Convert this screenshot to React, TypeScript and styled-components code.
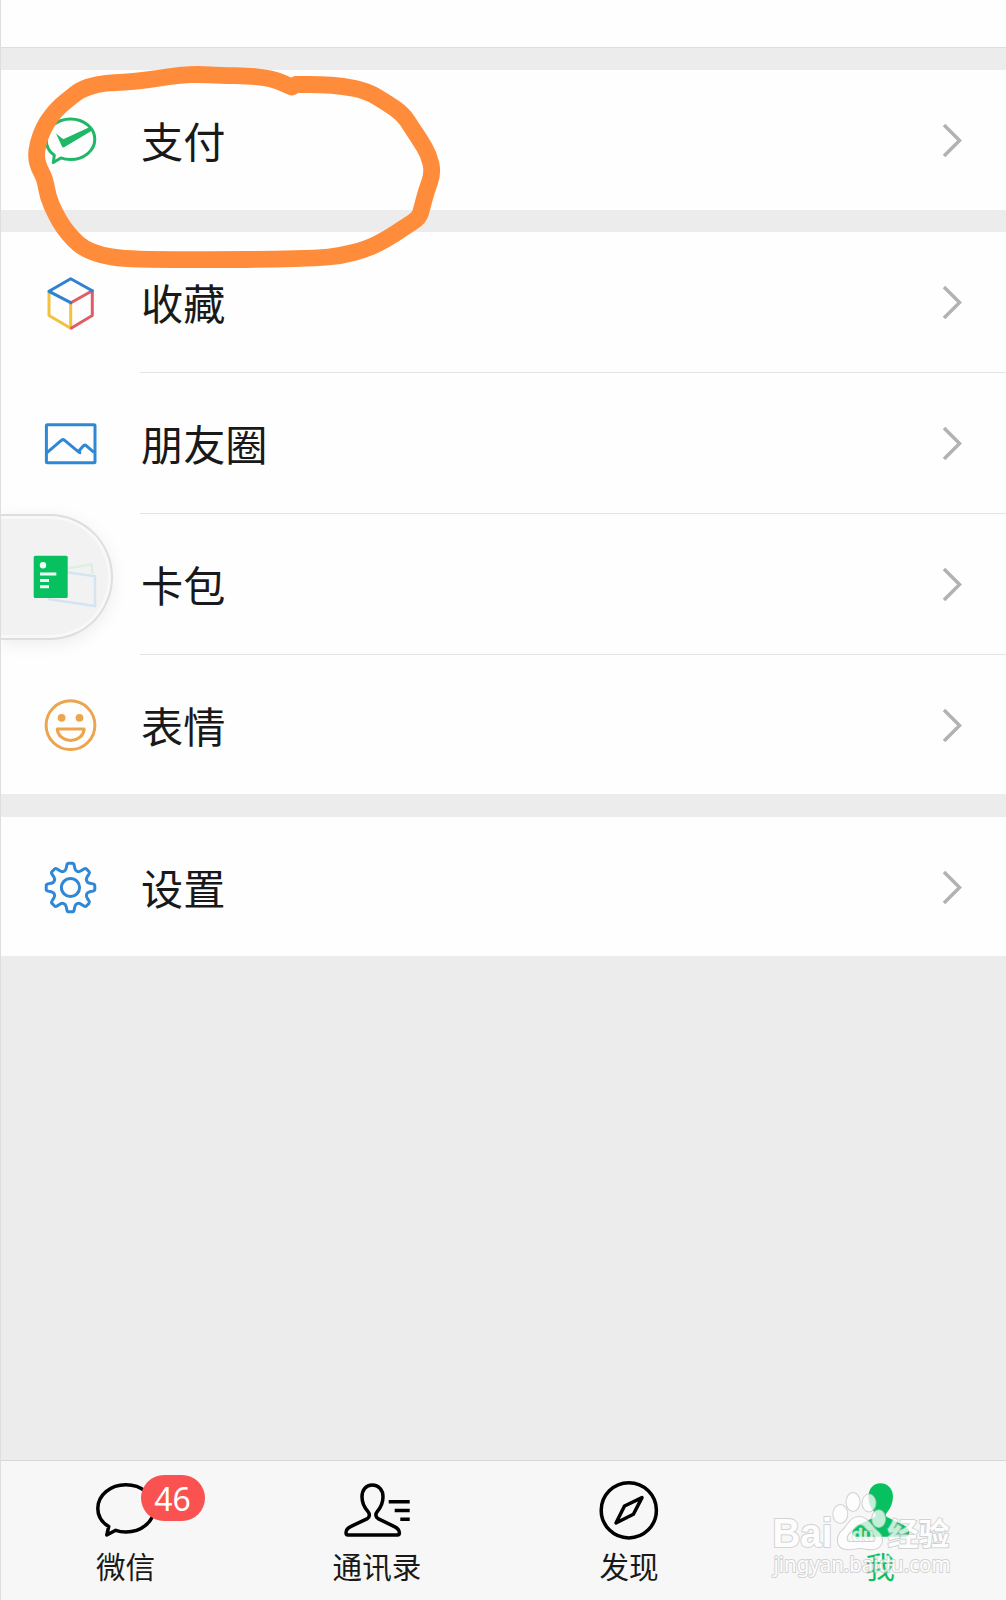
import React from 'react';
import styled, { createGlobalStyle, css } from 'styled-components';

const GlobalStyle = createGlobalStyle`
  * { box-sizing: border-box; }
  body {
    margin: 0;
    background: #ebebeb;
    font-family: "Noto Sans CJK SC", "Noto Sans", sans-serif;
    color: #191919;
  }
`;

const Screen = styled.main`
  position: relative;
  display: flex;
  flex-direction: column;
  width: 1006px;
  height: 1600px;
  overflow: hidden;
  background: #ececec;
  border-left: 1px solid #dedede;
`;

const ProfileTail = styled.div`
  flex: none;
  height: 48px;
  background: #fefefe;
  border-bottom: 1px solid #dedede;
`;

const List = styled.nav`
  display: flex;
  flex-direction: column;
  gap: 22px;
  padding-top: 22px;
`;

const Group = styled.section<{ $shift?: number }>`
  background: #fefefe;
  margin-top: ${p => p.$shift ?? 0}px;
`;

const Row = styled.div<{ $height: number }>`
  display: flex;
  align-items: flex-start;
  height: ${p => p.$height}px;
  padding-left: 41px;
`;

const RowIcon = styled.svg`
  flex: none;
  width: 56px;
  height: 56px;
  margin-top: 42px;
  fill: none;
  stroke-width: 3;
  stroke-linejoin: round;
  stroke-linecap: round;
`;

const RowBody = styled.div<{ $divided?: boolean }>`
  flex: 1;
  display: flex;
  align-self: stretch;
  align-items: flex-start;
  justify-content: space-between;
  margin-left: 42px;
  padding: 40px 44px 0 1px;
  ${p => p.$divided && css`border-bottom: 1px solid #e4e4e4;`}
`;

const RowLabel = styled.span`
  font-size: 42.2px;
  line-height: 60px;
`;

const Chevron = styled.svg`
  width: 20px;
  height: 34px;
  margin-top: 13px;
  fill: none;
  stroke: #b2b2b2;
  stroke-width: 3.5;
`;

const FloatingPanel = styled.aside`
  position: absolute;
  left: -1px;
  top: 514px;
  width: 113px;
  height: 126px;
  padding: 3px 3px 3px 0;
  border: 2px solid #dedede;
  border-left: 0;
  border-radius: 0 63px 63px 0;
  background: #f8f8f8;
  box-shadow: 0 4px 18px rgba(0, 0, 0, 0.07);
`;

const FloatingInner = styled.div`
  height: 100%;
  border-radius: 0 58px 58px 0;
  background: #f2f2f2;
  svg { display: block; }
`;

const TabBar = styled.footer`
  display: grid;
  grid-template-columns: 251px 250px 254px 250px;
  height: 140px;
  margin-top: auto;
  border-top: 1px solid #d6d6d6;
  background: #f7f7f7;
`;

const Tab = styled.div<{ $active?: boolean }>`
  position: relative;
  display: flex;
  flex-direction: column;
  align-items: center;
  padding-top: 17px;
  color: ${p => (p.$active ? '#07c160' : '#191919')};
`;

const TabIcon = styled.svg`
  width: 72px;
  height: 64px;
  fill: none;
  stroke: #000;
  stroke-width: 3.5;
  stroke-linejoin: round;
`;

const TabLabel = styled.span<{ $nudge?: number }>`
  margin: 3px ${p => p.$nudge ?? 0}px 0 0;
  font-size: 29.6px;
  line-height: 42px;
`;

const Badge = styled.span`
  position: absolute;
  left: 139.5px;
  top: 14px;
  width: 64px;
  height: 46px;
  border-radius: 23px;
  background: #fa5151;
  color: #fff;
  font: 32px/48px "Noto Sans", sans-serif;
  text-align: center;
`;

const Overlay = styled.svg`
  position: absolute;
  left: -1px;
  top: 0;
  pointer-events: none;
`;

const Watermark = styled.svg`
  position: absolute;
  left: 765px;
  top: 1485px;
  opacity: 0.75;
  pointer-events: none;
  fill: #fff;
  stroke: #c6c6c6;
  stroke-width: 2;
  paint-order: stroke;
  stroke-linejoin: round;
`;

const BODY =
  'M31.3 7C24.8 7 21 12 21 18.7C21 25.5 23.4 29.5 26.8 33.4C29 36 28.8 39 26.4 40.6L9.6 48.6C6 50.4 5 52 5 54.8C5 56.3 5.6 57 7 57H56.4C57.8 57 58.4 56.3 58.4 54.8C58.4 52 57 50.4 53.4 48.6L37 40.6C34.4 39 34.2 36 36.4 33.4C39.6 29.5 42 25.5 42 18.7C42 12 37.8 7 31.3 7Z';

const gearPath = () => {
  const point = (x: number, y: number, turn: number) => {
    const a = (turn * Math.PI) / 4;
    return `${(28.5 + x * Math.cos(a) - y * Math.sin(a)).toFixed(2)} ${(28.5 + x * Math.sin(a) + y * Math.cos(a)).toFixed(2)}`;
  };
  let d = '';
  for (let i = 0; i < 8; i++) {
    const p = (x: number, y: number) => point(x, y, i);
    d += `${i ? 'L' : 'M'}${p(-3.6, -22.6)}Q${p(-3.2, -24.3)} ${p(-1.8, -24.3)}L${p(1.8, -24.3)}Q${p(3.2, -24.3)} ${p(3.6, -22.6)}L${p(4.3, -19.3)}C${p(5, -16.1)} ${point(-5, -16.1, i + 1)} ${point(-4.3, -19.3, i + 1)}`;
  }
  return d + 'Z';
};

const markerPoints = [
  [292, 87], [282, 82.5], [270, 78.5], [250, 76], [220, 75.3], [200, 74.3], [180, 75], [157, 78.5], [133, 81.7], [115, 82.5],
  [97, 84], [80, 90], [70, 98], [60, 106], [51, 116], [43, 129], [38, 143], [36, 157], [39, 168], [45, 179], [48, 197],
  [55, 213], [63, 227], [73, 239], [83, 248], [100, 255], [123, 258.7], [157, 259.5], [220, 259.7], [273, 259.3],
  [317, 258], [340, 256], [367, 249], [387, 239], [405, 227], [419, 218], [422, 208], [426, 192], [433, 173],
  [429, 155], [420, 140], [412, 128], [403, 114], [387, 103], [367, 91], [343, 86], [320, 84.5], [300, 84.5], [292, 84.5],
];

const markerPath = () => {
  let d = `M${markerPoints[0].join(' ')}`;
  for (let i = 1; i < markerPoints.length - 1; i++) {
    const [x, y] = markerPoints[i];
    const [nx, ny] = markerPoints[i + 1];
    d += `Q${x} ${y} ${(x + nx) / 2} ${(y + ny) / 2}`;
  }
  return d + 'L292 87';
};

const PayIcon = () => (
  <RowIcon stroke="#1fb866">
    <path d="M11.3 50.6L12.3 43.3C7 39.8 4.2 33.8 4.2 27.2C4.2 16 15 6.9 28.5 6.9S52.8 16 52.8 27.2S42 47.5 28.5 47.5C25 47.5 21.7 47 18.8 45.9Z" />
    <path d="M14 21.5L20 34.4C20.5 35.6 21.6 35.7 22.6 35L51.4 17.8L49 14.5L22.8 26.6C21.7 27.1 20.9 26.9 20 26.3Z" fill="#1fb866" stroke="none" />
  </RowIcon>
);

const CubeIcon = () => (
  <RowIcon>
    <path stroke="#f2c140" d="M7 17.5V41.5L28.7 54.3V29" />
    <path stroke="#e15c64" d="M50.3 17V41.5L29.5 54M28.9 28.7L50.3 16.7" />
    <path stroke="#2f82d0" d="M28.7 28.7L7 17.3L28.7 4.8L50.3 16.7" />
  </RowIcon>
);

const PhotoIcon = () => (
  <RowIcon stroke="#2f88d6">
    <rect x="4.4" y="9.7" width="48.6" height="38" rx="1" />
    <path strokeLinecap="butt" d="M5 37.6L19.6 25.2Q21 24.1 22.4 25.2L36.5 36.8Q37.6 37.7 39.2 37.7M36 37L41 31.2Q42.6 29.4 44.4 30.8L52 37.4" />
  </RowIcon>
);

const SmileIcon = () => (
  <RowIcon stroke="#eba54e" viewBox="0 1 56 56">
    <circle cx="28.5" cy="29.2" r="24.4" />
    <circle cx="19.6" cy="21.8" r="3.9" fill="#eba54e" stroke="none" />
    <circle cx="37.5" cy="21.8" r="3.9" fill="#eba54e" stroke="none" />
    <path d="M15.2 33H42.2C41.6 39.6 36 44.4 28.7 44.4S15.8 39.6 15.2 33Z" />
  </RowIcon>
);

const GearIcon = () => (
  <RowIcon stroke="#2f88d6">
    <path d={gearPath()} />
    <circle cx="28.5" cy="28.5" r="9.1" />
  </RowIcon>
);

type Item = { label: string; height: number; icon?: React.ReactNode };

const groups: { shift?: number; items: Item[] }[] = [
  { items: [{ label: '支付', height: 140, icon: <PayIcon /> }] },
  {
    items: [
      { label: '收藏', height: 141, icon: <CubeIcon /> },
      { label: '朋友圈', height: 141, icon: <PhotoIcon /> },
      { label: '卡包', height: 141, icon: <RowIcon /> },
      { label: '表情', height: 139, icon: <SmileIcon /> },
    ],
  },
  { shift: 1, items: [{ label: '设置', height: 139, icon: <GearIcon /> }] },
];

export default function App() {
  return (
    <>
      <GlobalStyle />
      <Screen>
        <ProfileTail />
        <List>
          {groups.map((group, g) => (
            <Group key={g} $shift={group.shift}>
              {group.items.map((item, i) => (
                <Row key={item.label} $height={item.height}>
                  {item.icon}
                  <RowBody $divided={i < group.items.length - 1}>
                    <RowLabel>{item.label}</RowLabel>
                    <Chevron><path d="M2 2L17.6 17.5L2 33" /></Chevron>
                  </RowBody>
                </Row>
              ))}
            </Group>
          ))}
        </List>

        <TabBar>
          <Tab>
            <TabIcon>
              <path transform="translate(-0.5 0)" d="M16.3 57L18.2 48.6C11.3 44.3 7.3 37.8 7.3 30.4C7.3 17.3 19.8 6.8 35.4 6.8S63.5 17.3 63.5 30.4S51 54 35.4 54C31.8 54 28.2 53.4 25.2 52.3Z" />
            </TabIcon>
            <Badge>46</Badge>
            <TabLabel $nudge={2}>微信</TabLabel>
          </Tab>
          <Tab>
            <TabIcon>
              <path d={BODY} />
              <path d="M47.7 23.7H68.7M53.7 32.4H68.7M59.3 41.3H68.7" />
            </TabIcon>
            <TabLabel>通讯录</TabLabel>
          </Tab>
          <Tab>
            <TabIcon>
              <circle cx="35.8" cy="32.3" r="27.6" />
              <path d="M49 19.6L31.5 28L23 45L40.4 36.2Z" />
            </TabIcon>
            <TabLabel>发现</TabLabel>
          </Tab>
          <Tab $active>
            <TabIcon>
              <path d={BODY} transform="translate(4.2 0)" fill="#07c160" stroke="#07c160" />
            </TabIcon>
            <TabLabel $nudge={2}>我</TabLabel>
          </Tab>
        </TabBar>

        <FloatingPanel>
          <FloatingInner>
            <svg width="108" height="116" fill="none">
              <path d="M67 49.5L91.5 45.3L92.5 55" stroke="#dcefe3" strokeWidth="2.4" />
              <path d="M67 53.3L95 57.3V87L48 80" stroke="#d5e4f1" strokeWidth="2.4" />
              <rect x="33.7" y="36.7" width="34" height="42.3" rx="1.5" fill="#07c160" />
              <circle cx="43" cy="46.3" r="3.2" fill="#f0fff6" />
              <path d="M40 55H56.3M40 61.5H49M40 67.8H49" stroke="#f0fff6" strokeWidth="3" />
            </svg>
          </FloatingInner>
        </FloatingPanel>

        <Overlay width="460" height="290">
          <path d={markerPath()} fill="none" stroke="#ff8c3a" strokeWidth="16.8" strokeLinejoin="round" strokeLinecap="round" />
        </Overlay>

        <Watermark width="200" height="105">
          <text x="6.5" y="62" fontFamily="Liberation Sans, sans-serif" fontWeight="700" fontSize="40" textLength="60" lengthAdjust="spacingAndGlyphs">Bai</text>
          <ellipse cx="74.3" cy="29" rx="7" ry="9" />
          <ellipse cx="87" cy="17" rx="6.5" ry="9" />
          <ellipse cx="103" cy="18" rx="6.5" ry="8.5" />
          <ellipse cx="112.7" cy="33.7" rx="6.5" ry="8.5" />
          <path
            fillRule="evenodd"
            d="M93 32C84 32 82 41 76 46C70 51 70 63 80 64C86 65 89 63 94 63S103 65 108 64C118 62 118 51 111 46C105 41 102 32 93 32ZM81 56C80 53 81 50 84 47L92 40C95 38 98 40 100 43L108 50C110 52 110 55 108 57H83Z"
          />
          <text x="86" y="55.5" fontFamily="Liberation Sans, sans-serif" fontWeight="700" fontSize="19" strokeWidth="1" textLength="22" lengthAdjust="spacingAndGlyphs">du</text>
          <text x="121.5" y="60" fontFamily="Noto Sans CJK SC, sans-serif" fontWeight="700" fontSize="31">经验</text>
          <text x="7.5" y="87" fontFamily="Noto Sans, sans-serif" fontSize="22" textLength="177" lengthAdjust="spacingAndGlyphs">jingyan.baidu.com</text>
        </Watermark>
      </Screen>
    </>
  );
}
